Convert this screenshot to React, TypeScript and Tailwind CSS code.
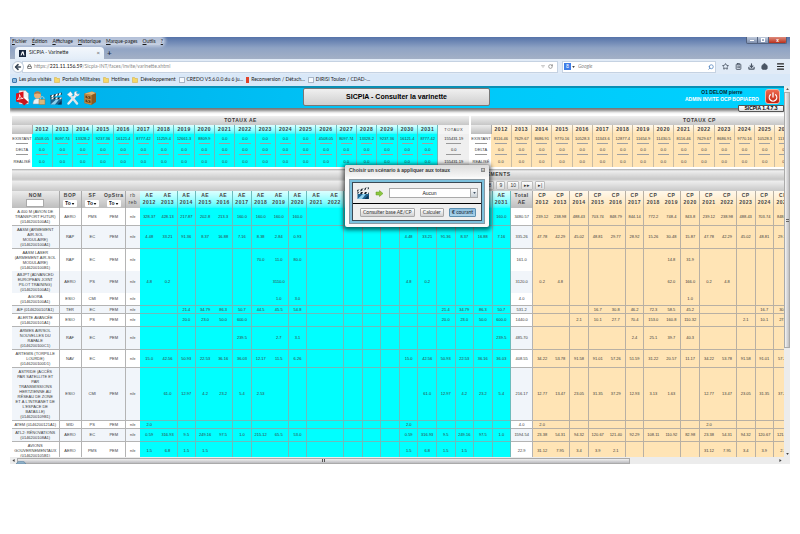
import { Download, House, Search, Star, Menu, ClipboardList, Power, RotateCw, ArrowLeft, Lock } from "lucide-react";

type Row = {
  name: string[];
  bop: string;
  sf: string;
  ae: string;
  total: string;
  cp: string;
  joined?: boolean;
};

// "-" stands for an empty amount
const ROWS: Row[] = [
  { name: ["A 400 M (AVION DE", "TRANSPORT FUTUR)", "(0146200100A1)"], bop: "AERO", sf: "PMS", ae: "328.37 428.13 217.87 202.8 213.3 160.0 160.0 160.0 160.0", total: "3480.57", cp: "239.12 238.98 488.43 703.74 848.79 844.14 772.2 748.4 843.8" },
  { name: ["AASM (ARMEMENT", "AIR-SOL", "MODULAIRE)", "(0146200100A1)"], bop: "RAP", sf: "EC", ae: "4.48 33.21 91.36 8.37 16.88 7.16 8.38 2.84 0.93", total: "335.26", cp: "47.78 42.29 45.02 48.81 29.77 28.92 15.26 30.48 15.87" },
  { name: ["AASM LASER", "(ARMEMENT AIR-SOL", "MODULAIRE)", "(0146200100B1)"], bop: "RAP", sf: "EC", ae: "- - - - - - 70.0 11.0 80.0", total: "161.0", cp: "- - - - - - - 14.8 31.9", joined: true },
  { name: ["ABJPT (ADVANCED", "EUROPEAN JOINT", "PILOT TRAINING)", "(0146200100A1)"], bop: "AERO", sf: "PS", ae: "4.8 0.2 - - - - - 3110.0 -", total: "3120.0", cp: "0.2 4.8 - - - - - 62.0 166.0", joined: true },
  { name: ["AGORA", "(0146200100A1)"], bop: "ESIO", sf: "CMI", ae: "- - - - - - - 1.0 3.0", total: "4.0", cp: "- - - - - - - - 1.0" },
  { name: ["AIF (0146200107A1)"], bop: "TER", sf: "EC", ae: "- - 21.4 34.79 86.3 50.7 44.5 45.5 54.8", total: "531.2", cp: "- - - 16.7 30.8 46.2 72.3 58.5 45.2" },
  { name: ["ALERTE AVANCÉE", "(0146200101A1)"], bop: "ESIO", sf: "PS", ae: "- - 20.0 23.0 50.0 600.0 - - -", total: "1440.0", cp: "- - 2.1 10.1 27.7 70.4 153.0 160.8 110.32" },
  { name: ["ARMES AIR/SOL", "NOUVELLES DU", "RAFALE", "(0146200100C1)"], bop: "RAF", sf: "EC", ae: "- - - - - 239.5 - 2.7 3.1", total: "485.70", cp: "- - - - - 2.4 25.1 39.7 40.3" },
  { name: ["ARTEMIS (TORPILLE", "LOURDE)", "(0146200100D1)"], bop: "NAV", sf: "EC", ae: "15.0 42.56 50.93 22.53 36.16 36.03 12.17 11.5 6.26", total: "408.55", cp: "34.22 53.78 91.58 91.01 57.26 51.59 31.22 20.57 11.17" },
  { name: ["ASTRIDE (ACCÈS", "PAR SATELLITE ET", "PAR", "TRANSMISSIONS", "HERTZIENNE AU", "RÉSEAU DE ZONE", "ET À L'INTRANET DE", "L'ESPACE DE", "BATAILLE)", "(0146200109B1)"], bop: "ESIO", sf: "CMI", ae: "- 61.0 12.97 4.2 23.2 5.4 2.53 - -", total: "216.17", cp: "12.77 13.47 23.05 31.35 37.29 12.93 3.13 1.63 -" },
  { name: ["ATEM (0146200121A1)"], bop: "MID", sf: "PS", ae: "2.0 - - - - - - - -", total: "4.0", cp: "2.0 - - - - - - - -" },
  { name: ["ATL2: RÉNOVATIONS", "(0146200108A1)"], bop: "AERO", sf: "EC", ae: "0.59 316.93 9.5 249.16 97.5 1.0 215.12 65.5 53.0", total: "1594.54", cp: "23.38 54.31 94.32 120.67 121.40 92.29 108.11 110.92 82.98" },
  { name: ["AVIONS", "GOUVERNEMENTAUX", "(0146200105B1)"], bop: "AERO", sf: "PMS", ae: "1.5 6.8 1.5 1.5 - - - - -", total: "22.9", cp: "31.12 7.95 3.4 3.9 2.1 - - - -" },
];

const YEARS = Array.from({ length: 20 }, (_, i) => 2012 + i);
const BLANK = ["-", "-", "-", "-", "-"];

const spreadAe = (line: string) => {
  const v = line.split(" ");
  return [...v, ...BLANK, ...v.slice(0, 6)];
};
const spreadCp = (line: string) => {
  const v = line.split(" ");
  return [...v, ...v, ...v.slice(0, 2)];
};

const TOTAL_AE_BASE = "4508.05 8097.74 13328.2 9237.36 16121.4 8777.42 11259.4 12661.3 8809.9".split(" ");
const TOTAL_AE = [...TOTAL_AE_BASE, "0.0", "0.0", "0.0", "0.0", "0.0", ...TOTAL_AE_BASE.slice(0, 6)];
const TOTAL_CP = spreadCp("8116.46 7629.67 8686.91 9770.16 10528.3 11343.6 12877.4 11654.9 11430.5");

// years that share their right edge with the next one
const OPEN_YEARS = [2012, 2015, 2018, 2021];
const AE_LINE = "border-[#6bbcbc]";
const CP_LINE = "border-[#b8b0a4]";

const GREY_BAR = "bg-linear-to-b from-[#f0f0f0] to-[#c6c6c6]";
const GREY_HEAD = "bg-linear-to-b from-[#ececec] to-[#bdbdbd]";
const AE_HEAD = "bg-linear-to-b from-[#dcffff] to-[#1cfbff]";
const CP_HEAD = "bg-linear-to-b from-[#fff8ec] to-[#ffe3b2]";

function TotalsTable({ title, kind, values, sum }: { title: string; kind: "ae" | "cp"; values: string[]; sum: string }) {
  const isAe = kind === "ae";
  const fill = isAe ? "bg-[#00ffff]" : "bg-[#ffe4b5]";
  const head = isAe ? AE_HEAD : CP_HEAD;
  const line = isAe ? AE_LINE : "border-[#c9bca4]";
  const lines = [
    { label: "EXISTANT", cells: values, sum, rule: true },
    { label: "DELTA", cells: values.map(() => "0.0"), sum: "0.0", rule: true },
    { label: "REALISÉ", cells: values.map(() => "0.0"), sum, rule: false },
  ];
  return (
    <table className="w-[457px] shrink-0 table-fixed border-collapse text-center text-[4px] leading-[5px] text-[#3a3a3a]">
      <colgroup>
        <col className="w-[20px]" />
        {YEARS.map((y) => (
          <col key={y} />
        ))}
        <col className="w-[31px]" />
      </colgroup>
      <thead>
        <tr className="h-[9px]">
          <th colSpan={22} className={`${GREY_BAR} text-[5px] tracking-widest text-[#3a3a3a]`}>
            {title}
          </th>
        </tr>
        <tr className="h-[9px] text-[5px] tracking-widest">
          <th className={`${GREY_HEAD} border-r border-[#aaa]`} />
          {YEARS.map((y) => (
            <th key={y} className={`${head} ${line} border-r`}>
              {y}
            </th>
          ))}
          <th className="bg-[#f4f4f4] text-[4px] font-normal">TOTAUX</th>
        </tr>
      </thead>
      <tbody>
        {lines.map((r) => (
          <tr key={r.label} className="h-[11px]">
            <th className="overflow-hidden bg-white font-normal">
              {r.label}
              {r.rule && <div className="mx-[4px] mt-[2px] border-b border-[#999]" />}
            </th>
            {r.cells.map((v, i) => (
              <td key={i} className={`${fill} ${line} overflow-hidden border-r`}>
                {v}
                {r.rule && <div className="mx-[4px] mt-[2px] border-b border-[#a0a0a0]" />}
              </td>
            ))}
            <td className="bg-[#efefef] text-[#222]">
              {r.sum}
              {r.rule && <div className="mx-[8px] mt-[2px] border-b border-[#999]" />}
            </td>
          </tr>
        ))}
      </tbody>
    </table>
  );
}

function HeaderFilter({ label }: { label: string }) {
  return (
    <label className="flex flex-col items-center gap-[1px]">
      <span className="tracking-widest">{label}</span>
      <span className="relative">
        <select className="block h-[7px] w-[14px] appearance-none rounded-[1px] bg-white pl-[2px] text-[5px] leading-[7px] font-bold text-[#222]">
          <option>To</option>
        </select>
        <svg viewBox="0 0 4 3" className="pointer-events-none absolute top-[3px] right-[2px] h-[2px] w-[4px]">
          <path d="M0 0h4L2 3z" fill="#111" />
        </svg>
      </span>
    </label>
  );
}

function ProgramTable() {
  return (
    <table className="w-[892px] table-fixed border-collapse text-center text-[4px] leading-[5px] text-[#3a3a3a]">
      <colgroup>
        <col className="w-[47px]" />
        <col className="w-[22px]" />
        <col className="w-[22px]" />
        <col className="w-[22px]" />
        <col className="w-[15px]" />
        {YEARS.map((y) => (
          <col key={y} />
        ))}
        <col className="w-[22px]" />
        {YEARS.map((y) => (
          <col key={y} />
        ))}
      </colgroup>
      <thead>
        <tr className="h-[10px]">
          <th colSpan={46} className={`${GREY_BAR} border-t border-[#bbb] text-[5px] tracking-widest text-[#3a3a3a]`}>
            PROGRAMMES ET REGROUPEMENTS
          </th>
        </tr>
        <tr className="h-[11px]">
          <td colSpan={46} className={`${GREY_BAR} border-t border-[#ccc]`}>
            <div className="flex justify-center gap-[2px] pl-[12px]">
              {["|◂", "◂◂", "1", "2", "3", "4", "5", "6", "7", "8", "9", "10", "▸▸", "▸|"].map((p) => (
                <button
                  key={p}
                  className="h-[9px] min-w-[9px] rounded-[1px] border border-[#bdbdbd] bg-linear-to-b from-white to-[#dcdcdc] px-[2px] text-[5px] leading-[7px] text-[#333]"
                >
                  {p}
                </button>
              ))}
            </div>
          </td>
        </tr>
        <tr className="h-[17px] text-[5px] leading-[7px] text-[#444]">
          <th className={`${GREY_HEAD} border-r border-[#aaa]`}>
            <label className="flex flex-col items-center">
              <span className="tracking-widest">NOM</span>
              <input className="h-[8px] w-[18px] border border-[#aaa] bg-white text-[4px]" />
            </label>
          </th>
          <th className={`${GREY_HEAD} border-r border-[#aaa]`}>
            <HeaderFilter label="BOP" />
          </th>
          <th className={GREY_HEAD}>
            <HeaderFilter label="SF" />
          </th>
          <th className={`${GREY_HEAD} border-r border-[#aaa]`}>
            <HeaderFilter label="OpStra" />
          </th>
          <th className={`${GREY_HEAD} overflow-hidden font-normal tracking-widest`}>
            rb
            <br />
            reb
          </th>
          {YEARS.map((y) => (
            <th key={y} className={`${AE_HEAD} ${AE_LINE} tracking-widest ${OPEN_YEARS.includes(y) ? "" : "border-r"}`}>
              AE
              <br />
              {y}
            </th>
          ))}
          <th className={`${GREY_HEAD} border-r border-[#aaa] tracking-widest`}>
            Total
            <br />
            AE
          </th>
          {YEARS.map((y) => (
            <th key={y} className={`${CP_HEAD} ${CP_LINE} tracking-widest ${OPEN_YEARS.includes(y) || y === 2025 ? "" : "border-r"}`}>
              CP
              <br />
              {y}
            </th>
          ))}
        </tr>
      </thead>
      <tbody>
        {ROWS.map((r, i) => {
          const side = i % 2 === 1 ? "bg-[#f1f5fa]" : "bg-white";
          const under = r.joined ? "" : "border-b";
          return (
            <tr key={r.name[0]}>
              <th className={`${side} ${under} border-r border-[#b4b4b4] py-[1px] font-normal whitespace-nowrap`}>
                {r.name.map((n) => (
                  <div key={n}>{n}</div>
                ))}
              </th>
              <td className={`${side} ${under} border-r border-[#b4b4b4]`}>{r.bop}</td>
              <td className={`${side} ${under} border-[#b4b4b4]`}>{r.sf}</td>
              <td className={`${side} ${under} border-r border-[#b4b4b4]`}>PEM</td>
              <td className={`${side} ${under} border-[#b4b4b4]`}>n/e</td>
              {spreadAe(r.ae).map((v, k) => (
                <td key={k} className={`bg-[#00ffff] ${AE_LINE} ${under} ${OPEN_YEARS.includes(YEARS[k]) ? "" : "border-r"}`}>
                  {v === "-" ? "" : v}
                </td>
              ))}
              <td className={`${side} ${under} border-r border-[#b4b4b4]`}>{r.total}</td>
              {spreadCp(r.cp).map((v, k) => (
                <td key={k} className={`bg-[#ffe4b5] ${CP_LINE} ${under} ${OPEN_YEARS.includes(YEARS[k]) || YEARS[k] === 2025 ? "" : "border-r"}`}>
                  {v === "-" ? "" : v}
                </td>
              ))}
            </tr>
          );
        })}
      </tbody>
    </table>
  );
}

function Clapper({ className }: { className: string }) {
  return (
    <svg viewBox="0 0 28 28" className={className}>
      <path d="M2 8 25 2l1 4L3 12z" fill="#26313a" />
      <path d="m6 7 4-1-2 5-4 1zM14 5l4-1-2 5-4 1zM21 3l3-.6-1 5-4 1z" fill="#fff" />
      <path d="M3 12h23v4H3z" fill="#18222b" />
      <path d="m6 12h4l-2 4H4zM14 12h4l-2 4h-4zM22 12h4l-2 4h-4z" fill="#e8eef2" />
      <path d="M3 16h23v10H3z" fill="#1d628f" />
      <path d="M3 26 14 16h6L12 26z" fill="#8fd0ee" />
      <path d="M17 26l8-8v8z" fill="#0d3557" />
    </svg>
  );
}

function ToolIcons() {
  return (
    <div className="flex gap-[3px] pl-[5px]">
      <button aria-label="Export PDF">
        <svg viewBox="0 0 28 32" className="h-[16px] w-[14px]">
          <path d="M8 1h13l6 6v21H8z" fill="#f2f2f2" stroke="#999" />
          <path d="M2 7 17 3v24L2 23z" fill="#d8141c" />
          <path d="M5 19c3-2 5-7 4-10 1 5 4 8 7 8-4 0-8 1-11 2z" fill="none" stroke="#fff" strokeWidth="1.6" />
          <path d="m10 21 9-5 8 8-9 7z" fill="#c8161d" />
          <path d="m18 16 4-2 5 5v5z" fill="#fff" />
        </svg>
      </button>
      <button aria-label="Utilisateur">
        <svg viewBox="0 0 28 32" className="h-[16px] w-[14px]">
          <path d="M2 28c0-8 4-11 9-11s9 3 9 11z" fill="#eef1f4" stroke="#8795a2" />
          <circle cx="11" cy="10" r="7" fill="#e7b27c" />
          <path d="M4 9c0-9 14-9 14 0-4-3-9-3-14 0z" fill="#a9784a" />
          <path d="M17 20v-3c0-5 7-5 7 0v3" fill="none" stroke="#c9c9c9" strokeWidth="2" />
          <path d="M14 19h12v10H14z" fill="#d9b77a" stroke="#97763a" />
        </svg>
      </button>
      <button aria-label="Scénario">
        <Clapper className="h-[15px] w-[14px]" />
      </button>
      <button aria-label="Outils">
        <svg viewBox="0 0 28 32" className="h-[16px] w-[14px]">
          <path d="M5 27 21 9" stroke="#e9eef2" strokeWidth="5" strokeLinecap="round" />
          <path d="M18 3c-3 3-2 8 2 9 4 1 7-1 7-5l-4 2-3-3 3-3z" fill="#f4f6f8" stroke="#8b98a3" strokeWidth=".7" />
          <path d="m9 11 13 16" stroke="#dde4e9" strokeWidth="5" strokeLinecap="round" />
          <path d="M2 9 9 3l5 6-6 5z" fill="#f6f8fa" stroke="#84909a" strokeWidth=".7" />
        </svg>
      </button>
      <button aria-label="Archives">
        <svg viewBox="0 0 28 32" className="h-[16px] w-[14px]">
          <path d="m3 7 15-4 8 3v18l-9 6-14-4z" fill="#8a5a22" />
          <path d="m3 7 14 3v20L3 26z" fill="#c28a42" />
          <path d="m3 7 15-4 8 3-9 4z" fill="#e2b671" />
          <path d="m5 11 10 2v5L5 16zM5 19l10 2v5L5 24z" fill="#6d4116" />
          <path d="m8 13 4 1v1l-4-1zM8 21l4 1v1l-4-1z" fill="#f3dca8" />
        </svg>
      </button>
    </div>
  );
}

function Folder() {
  return (
    <svg viewBox="0 0 12 12" className="size-[6px]">
      <path d="M1 1h4l1 2h5v8H1z" fill="#f5d76a" stroke="#d2aa3a" />
    </svg>
  );
}

function Blank() {
  return <span className="size-[6px] border border-dashed border-[#a9b6c6] bg-[#f6f9fd]" />;
}

function BrowserChrome() {
  const bookmarks = [
    { t: "Les plus visités", icon: <span className="size-[5px] rounded-[1px] border border-[#3d78ad] bg-[#8fbbe0]" /> },
    { t: "Portails Militaires", icon: <Folder /> },
    { t: "Hotlines", icon: <Folder /> },
    { t: "Développement", icon: <Folder /> },
    { t: "CREDO V5.6.0.0 du 6 ju...", icon: <Blank /> },
    { t: "Reconversion / Détach...", icon: <span className="h-[6px] w-[3px] bg-[#e0432b]" /> },
    { t: "DIRISI Toulon / CDAD-...", icon: <Blank /> },
  ];
  return (
    <header className="font-['Lato',sans-serif] text-[5px] text-[#1b1b1b]">
      <div className="bg-linear-to-b from-[#5673a9] via-[#8fa3c4] to-[#a3b0c6]">
        <div className="flex h-[9px] items-start justify-between">
          <nav className="ml-[1px] flex gap-[5px] rounded bg-white/55 px-[1px] leading-[8px] shadow-[0_0_3px_2px_rgba(255,255,255,0.45)]">
            {["Fichier", "Édition", "Affichage", "Historique", "Marque-pages", "Outils", "?"].map((m) => (
              <span key={m}>
                <u>{m[0]}</u>
                {m.slice(1)}
              </span>
            ))}
          </nav>
          <div className="mr-[3px] flex h-[7px] overflow-hidden rounded-b-[2px] border border-t-0 border-[#53627e]">
            <button aria-label="Réduire" className="flex w-[11px] items-end justify-center border-r border-[#53627e] bg-linear-to-b from-[#c0cadb] to-[#7f90af] pb-[2px]">
              <span className="h-[1px] w-[4px] bg-white" />
            </button>
            <button aria-label="Restaurer" className="flex w-[11px] items-center justify-center border-r border-[#53627e] bg-linear-to-b from-[#c0cadb] to-[#7f90af]">
              <span className="size-[4px] border border-white" />
            </button>
            <button aria-label="Fermer" className="w-[17px] bg-linear-to-b from-[#dd8a7c] to-[#b92c17] text-center text-[5px] leading-[6px] font-bold text-white">
              x
            </button>
          </div>
        </div>
        <div className="flex h-[13px] items-end pl-[5px]">
          <div className="flex h-[12px] w-[89px] items-center rounded-t-[4px] bg-linear-to-b from-[#f3f7fc] to-[#e3edf8] px-[4px]">
            <svg viewBox="0 0 14 14" className="size-[7px]">
              <path d="M0 0h14v14H0z" fill="#15243c" />
              <path d="M3 11 6 3h3l2 8H9L7 6l-2 5z" fill="#fff" />
            </svg>
            <span className="ml-[3px] flex-1">SICPIA - Varinette</span>
            <button aria-label="Fermer l'onglet" className="text-[6px] leading-[6px] text-[#555]">×</button>
          </div>
          <button aria-label="Nouvel onglet" className="ml-[3px] text-[8px] leading-[12px] font-bold text-[#22324c]">+</button>
        </div>
      </div>
      <div className="flex h-[15px] items-center bg-[#e1ebf7] pr-[5px] pl-[2px]">
        <button aria-label="Précédent" className="z-10 flex size-[12px] items-center justify-center rounded-full border border-[#bccadb] bg-white">
          <ArrowLeft className="size-[8px] text-[#3a4757]" strokeWidth={5} />
        </button>
        <div className="-ml-[2px] flex h-[12px] min-w-0 flex-1 items-center border border-[#c5d2e2] bg-white px-[4px] text-[#8a8a8a]">
          <Lock className="size-[5px] text-[#666]" strokeWidth={4} />
          <span className="ml-[2px] flex-1 whitespace-nowrap">
            https://<b className="font-normal text-[#111]">221.11.156.59</b>/Sicpia-INT/faces/invite/varinette.xhtml
          </span>
          <svg viewBox="0 0 8 6" className="mr-[3px] h-[3px] w-[4px]">
            <path d="M1 1h6L4 5z" fill="none" stroke="#999" />
          </svg>
          <RotateCw className="size-[5px] text-[#777]" strokeWidth={3} />
        </div>
        <div className="ml-[4px] flex h-[12px] w-[154px] items-center border border-[#c5d2e2] bg-white px-[1px]">
          <span className="flex size-[7px] items-center justify-center bg-[#3f7ee8] text-[5px] leading-[7px] text-white">8</span>
          <svg viewBox="0 0 4 3" className="ml-[1px] h-[2px] w-[3px]">
            <path d="M0 0h4L2 3z" fill="#444" />
          </svg>
          <input aria-label="Recherche" placeholder="Google" className="ml-[3px] min-w-0 flex-1 bg-transparent text-[5px] text-[#777] italic outline-none placeholder:text-[#888]" />
          <Search className="size-[6px] -scale-x-100 text-[#4f81bd]" strokeWidth={3} />
        </div>
        <div className="ml-[6px] flex items-center gap-[6px] text-[#4a5564]">
          <Star className="size-[7px]" strokeWidth={3} />
          <ClipboardList className="size-[7px]" strokeWidth={3} />
          <Download className="size-[7px]" strokeWidth={4} />
          <House className="size-[7px]" fill="#4a5564" strokeWidth={3} />
          <Menu className="ml-[2px] size-[9px] text-[#222]" strokeWidth={3} />
        </div>
      </div>
      <div className="flex h-[12px] items-center gap-[3px] bg-[#d9e8f8] pl-[2px]">
        {bookmarks.map((b) => (
          <a key={b.t} href="#" className="flex items-center gap-[2px] whitespace-nowrap">
            {b.icon}
            {b.t}
          </a>
        ))}
      </div>
    </header>
  );
}

function ScenarioDialog() {
  const btn = "h-[9px] rounded-[1px] border px-[2px] font-['Lato',sans-serif] text-[5px] leading-[7px]";
  return (
    <div role="dialog" aria-label="Choisir un scénario" className="absolute top-[79px] left-[335px] w-[144px] rounded-[2px] bg-[#fafafa] pb-[3px] shadow-[0_1px_4px_2px_rgba(0,0,0,0.6)]">
      <div className="flex h-[12px] items-center justify-between rounded-t-[2px] bg-linear-to-b from-[#dcdcdc] to-[#f6f6f6] px-[4px] text-[5px] font-bold text-[#3a3a3a]">
        <span className="whitespace-nowrap">Choisir un scénario à appliquer aux totaux</span>
        <button aria-label="Fermer" className="mb-[3px] size-[4px] bg-[#8a8a8a] text-[4px] leading-[4px] text-white">×</button>
      </div>
      <div className="mx-[4px] mt-[2px] border border-[#8a9aa4] bg-[#7cc0dc] p-[2px]">
        <div className="border border-[#3b4a55] bg-[#efefef]">
          <div className="flex h-[21px] items-center border-b border-black px-[3px]">
            <Clapper className="size-[14px]" />
            <svg viewBox="0 0 16 14" className="mx-[5px] h-[7px] w-[9px]">
              <path d="M1 4h7V1l7 6-7 6v-3H1z" fill="#8cc63e" stroke="#5d9a22" />
            </svg>
            <span className="relative flex-1">
              <select aria-label="Scénario" className="block h-[10px] w-full appearance-none border border-[#aaa] bg-white pr-[8px] text-center text-[5px] leading-[8px] text-[#222]">
                <option>Aucun</option>
              </select>
              <span className="pointer-events-none absolute top-0 right-0 flex h-[10px] w-[8px] items-center justify-center border border-[#aaa] bg-linear-to-b from-white to-[#c8d0d6]">
                <svg viewBox="0 0 4 3" className="h-[2px] w-[3px]">
                  <path d="M0 0h4L2 3z" fill="#456" />
                </svg>
              </span>
            </span>
          </div>
          <div className="flex h-[16px] items-center justify-between pr-[5px] pl-[7px] text-[#333]">
            <button className={`${btn} border-[#a8a8a8] bg-linear-to-b from-white to-[#d2d2d2] text-[#333]`}>Consulter base AE/CP</button>
            <button className={`${btn} border-[#a8a8a8] bg-linear-to-b from-white to-[#d2d2d2] text-[#333]`}>Calculer</button>
            <button className={`${btn} border-[#5b8fb0] bg-linear-to-b from-[#8dbfdf] to-[#a9d2ea] text-[#123]`}>€ courant</button>
          </div>
        </div>
      </div>
    </div>
  );
}

export default function App() {
  return (
    <div className="min-h-screen bg-white px-[10px] pt-[37px] font-['Liberation_Sans',Arial,sans-serif]">
      <BrowserChrome />
      <div className="flex h-[371px]">
        <main className="relative flex min-w-0 flex-1 flex-col overflow-hidden">
          <div className="relative flex h-[22px] shrink-0 items-center justify-between border-t-2 border-[#0a8fb4] bg-linear-to-r from-[#00aeea] via-[#00c6f8] to-[#00d2ff] shadow-[0_2px_3px_1px_rgba(0,0,0,0.55)]">
            <ToolIcons />
            <h1 className="absolute top-0 left-[293px] h-[18px] w-[187px] rounded-[2px] border border-[#777] bg-linear-to-b from-[#f0f0f0] to-[#cfcfcf] text-center text-[7px] leading-[16px] font-bold text-black">
              SICPIA - Consulter la varinette
            </h1>
            <div className="flex items-center gap-[6px] self-start pr-[4px]">
              <div className="text-center text-[5px] leading-[7px] font-bold">
                <div className="text-[#07242f]">O1 DELOM pierre</div>
                <div className="text-white">ADMIN INVITE OCP BOPIAERO</div>
              </div>
              <button aria-label="Déconnexion" className="mt-[1px] flex size-[15px] items-center justify-center rounded-[3px] border border-[#f2b3a4] bg-linear-to-b from-[#ee6a50] to-[#c01f0c]">
                <Power className="size-[10px] text-white" strokeWidth={3} />
              </button>
            </div>
          </div>
          <div className="relative z-10 -mt-[3px] flex h-[11px] shrink-0 justify-end">
            <span className="h-[7px] w-[46px] rounded-bl-[2px] border border-[#555] bg-linear-to-b from-white to-[#ddd] text-center text-[5px] leading-[5px] font-bold text-black">
              SICPIA 1.4.7.3
            </span>
          </div>
          <div className="flex gap-[2px] pl-[2px]">
            <TotalsTable title="TOTAUX AE" kind="ae" values={TOTAL_AE} sum="155431.19" />
            <TotalsTable title="TOTAUX CP" kind="cp" values={TOTAL_CP} sum="155431.19" />
          </div>
          <div className="mt-[2px] pl-[2px]">
            <ProgramTable />
          </div>
          <ScenarioDialog />
        </main>
        <aside className="flex w-[6px] flex-col items-center bg-[#ececec]">
          <svg viewBox="0 0 4 3" className="my-[2px] h-[2px] w-[3px]">
            <path d="M0 3h4L2 0z" fill="#555" />
          </svg>
          <div className="flex h-[256px] w-full flex-col items-center justify-center gap-[1px] border border-[#aaa] bg-linear-to-r from-[#f4f4f4] to-[#bfbfc2]">
            <span className="h-[1px] w-[3px] bg-[#666]" />
            <span className="h-[1px] w-[3px] bg-[#666]" />
          </div>
          <svg viewBox="0 0 4 3" className="mt-auto mb-[2px] h-[2px] w-[3px]">
            <path d="M0 0h4L2 3z" fill="#444" />
          </svg>
        </aside>
      </div>
      <footer className="relative flex h-[7px] items-center bg-[#ececec] px-[2px]">
        <svg viewBox="0 0 3 4" className="mr-[2px] h-[3px] w-[3px]">
          <path d="M3 0v4L0 2z" fill="#444" />
        </svg>
        <div className="flex h-[6px] w-[79%] items-center justify-center gap-[1px] border border-[#aaa] bg-linear-to-b from-[#f0f0f0] to-[#bcbcc0]">
          <span className="h-[3px] w-[1px] bg-[#555]" />
          <span className="h-[3px] w-[1px] bg-[#555]" />
        </div>
        <svg viewBox="0 0 3 4" className="mr-[6px] ml-auto h-[3px] w-[3px]">
          <path d="M0 0v4L3 2z" fill="#444" />
        </svg>
        <svg viewBox="0 0 10 3" className="absolute bottom-0 left-[6px] h-[3px] w-[10px]">
          <path d="M0 3c2-4 8-4 10 0z" fill="#8fb0c8" stroke="#5b7f9c" strokeWidth=".6" />
        </svg>
      </footer>
    </div>
  );
}
